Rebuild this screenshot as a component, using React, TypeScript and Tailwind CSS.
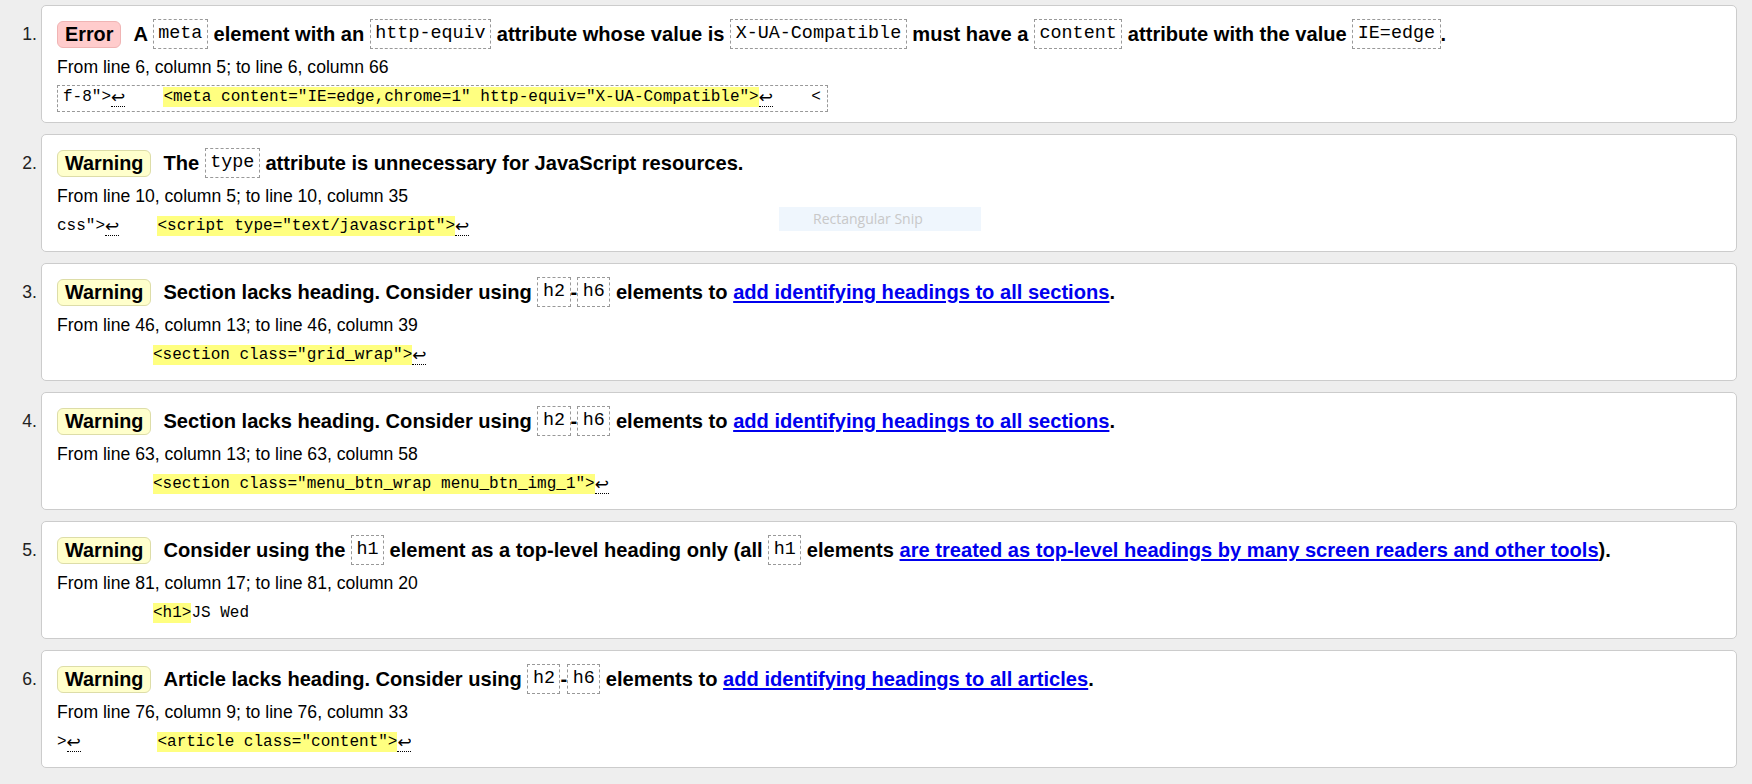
type Seg = { t: 'txt' | 'code' | 'link'; v: string };
type Part = { t: 'plain' | 'ret' | 'hl'; v?: string };

type Item = {
  kind: 'Error' | 'Warning';
  title: Seg[];
  from: string;
  code: Part[];
  boxed?: boolean;
};

const items: Item[] = [
  {
    kind: 'Error',
    title: [
      { t: 'txt', v: 'A ' },
      { t: 'code', v: 'meta' },
      { t: 'txt', v: ' element with an ' },
      { t: 'code', v: 'http-equiv' },
      { t: 'txt', v: ' attribute whose value is ' },
      { t: 'code', v: 'X-UA-Compatible' },
      { t: 'txt', v: ' must have a ' },
      { t: 'code', v: 'content' },
      { t: 'txt', v: ' attribute with the value ' },
      { t: 'code', v: 'IE=edge' },
      { t: 'txt', v: '.' },
    ],
    from: 'From line 6, column 5; to line 6, column 66',
    code: [
      { t: 'plain', v: 'f-8">' },
      { t: 'ret' },
      { t: 'plain', v: '    ' },
      { t: 'hl', v: '<meta content="IE=edge,chrome=1" http-equiv="X-UA-Compatible">' },
      { t: 'ret' },
      { t: 'plain', v: '    <' },
    ],
    boxed: true,
  },
  {
    kind: 'Warning',
    title: [
      { t: 'txt', v: 'The ' },
      { t: 'code', v: 'type' },
      { t: 'txt', v: ' attribute is unnecessary for JavaScript resources.' },
    ],
    from: 'From line 10, column 5; to line 10, column 35',
    code: [
      { t: 'plain', v: 'css">' },
      { t: 'ret' },
      { t: 'plain', v: '    ' },
      { t: 'hl', v: '<script type="text/javascript">' },
      { t: 'ret' },
    ],
  },
  {
    kind: 'Warning',
    title: [
      { t: 'txt', v: 'Section lacks heading. Consider using ' },
      { t: 'code', v: 'h2' },
      { t: 'txt', v: '-' },
      { t: 'code', v: 'h6' },
      { t: 'txt', v: ' elements to ' },
      { t: 'link', v: 'add identifying headings to all sections' },
      { t: 'txt', v: '.' },
    ],
    from: 'From line 46, column 13; to line 46, column 39',
    code: [
      { t: 'plain', v: '          ' },
      { t: 'hl', v: '<section class="grid_wrap">' },
      { t: 'ret' },
    ],
  },
  {
    kind: 'Warning',
    title: [
      { t: 'txt', v: 'Section lacks heading. Consider using ' },
      { t: 'code', v: 'h2' },
      { t: 'txt', v: '-' },
      { t: 'code', v: 'h6' },
      { t: 'txt', v: ' elements to ' },
      { t: 'link', v: 'add identifying headings to all sections' },
      { t: 'txt', v: '.' },
    ],
    from: 'From line 63, column 13; to line 63, column 58',
    code: [
      { t: 'plain', v: '          ' },
      { t: 'hl', v: '<section class="menu_btn_wrap menu_btn_img_1">' },
      { t: 'ret' },
    ],
  },
  {
    kind: 'Warning',
    title: [
      { t: 'txt', v: 'Consider using the ' },
      { t: 'code', v: 'h1' },
      { t: 'txt', v: ' element as a top-level heading only (all ' },
      { t: 'code', v: 'h1' },
      { t: 'txt', v: ' elements ' },
      { t: 'link', v: 'are treated as top-level headings by many screen readers and other tools' },
      { t: 'txt', v: ').' },
    ],
    from: 'From line 81, column 17; to line 81, column 20',
    code: [
      { t: 'plain', v: '          ' },
      { t: 'hl', v: '<h1>' },
      { t: 'plain', v: 'JS Wed' },
    ],
  },
  {
    kind: 'Warning',
    title: [
      { t: 'txt', v: 'Article lacks heading. Consider using ' },
      { t: 'code', v: 'h2' },
      { t: 'txt', v: '-' },
      { t: 'code', v: 'h6' },
      { t: 'txt', v: ' elements to ' },
      { t: 'link', v: 'add identifying headings to all articles' },
      { t: 'txt', v: '.' },
    ],
    from: 'From line 76, column 9; to line 76, column 33',
    code: [
      { t: 'plain', v: '>' },
      { t: 'ret' },
      { t: 'plain', v: '        ' },
      { t: 'hl', v: '<article class="content">' },
      { t: 'ret' },
    ],
  },
];

const Title = ({ segs }: { segs: Seg[] }) => (
  <div className="leading-[30px] whitespace-pre text-[20.1px] font-bold text-black">
    {segs.map((s, i) => {
      if (s.t === 'code')
        return (
          <code
            key={i}
            className="inline-block align-middle leading-[28px] px-[4.5px] border border-dashed border-[#999] font-['Liberation_Mono',monospace] text-[18.4px] font-normal -mt-[2px]"
          >
            {s.v}
          </code>
        );
      if (s.t === 'link')
        return (
          <a key={i} href="#" className="text-[#0000ee] underline">
            {s.v}
          </a>
        );
      return <span key={i}>{s.v}</span>;
    })}
  </div>
);

const CodeLine = ({ parts }: { parts: Part[] }) => (
  <span className="whitespace-pre font-['Liberation_Mono',monospace] text-[16px] text-black">
    {parts.map((p, i) => {
      if (p.t === 'ret')
        return (
          <span
            key={i}
            className="inline-block align-top w-[14px] h-[20px] leading-[20px] text-center border-b border-dotted border-black text-[17px] font-['DejaVu_Sans',sans-serif] overflow-hidden"
          >
            ↩
          </span>
        );
      if (p.t === 'hl')
        return (
          <span key={i} className="inline-block align-top h-[20px] leading-[20px] bg-[#ffff80]">
            {p.v}
          </span>
        );
      return (
        <span key={i} className="inline-block align-top h-[20px] leading-[20px]">
          {p.v}
        </span>
      );
    })}
  </span>
);

export default function App() {
  return (
    <div className="relative min-h-[784px] w-full bg-[#eeeeee] pt-[5px] font-['Liberation_Sans',Arial,sans-serif]">
      <ol className="flex flex-col gap-[11px]">
        {items.map((it, n) => (
          <li key={n} className="flex items-start">
            <div className="w-[37px] mt-[14px] h-[30px] flex items-center justify-end text-[17.6px] text-[#222]">
              {n + 1}.
            </div>
            <div className="ml-[4px] w-[1696px] bg-white border border-[#cccccc] rounded-[5px] pl-[15px] pt-[13px] pb-[10px]">
              <div className="flex items-center h-[30px]">
                <span
                  className={
                    it.kind === 'Error'
                      ? 'h-[27px] leading-[25px] px-[7px] mr-[12px] rounded-[6px] border border-[#f0b4b4] bg-[#ffcccc] text-[19.8px] font-bold text-black'
                      : 'h-[27px] leading-[25px] px-[7px] mr-[12px] rounded-[6px] border border-[#dddda8] bg-[#ffffcc] text-[19.8px] font-bold text-black'
                  }
                >
                  {it.kind}
                </span>
                <Title segs={it.title} />
              </div>
              <div className="mt-[6px] h-[24px] leading-[24px] text-[17.6px] text-black">{it.from}</div>
              <div className="mt-[6px] h-[27px] flex items-center">
                {it.boxed ? (
                  <div className="h-[27px] flex items-center border border-dashed border-[#999] pl-[5px] pr-[6px]">
                    <CodeLine parts={it.code} />
                  </div>
                ) : (
                  <CodeLine parts={it.code} />
                )}
              </div>
            </div>
          </li>
        ))}
      </ol>
      {/* screen snip tooltip left in the capture */}
      <div className="absolute left-[779px] top-[207px] w-[202px] h-[24px] bg-[#eff6fd] pl-[34px] leading-[24px] text-[14px] text-[#c8c8c8] font-['Open_Sans',sans-serif]">
        Rectangular Snip
      </div>
    </div>
  );
}
